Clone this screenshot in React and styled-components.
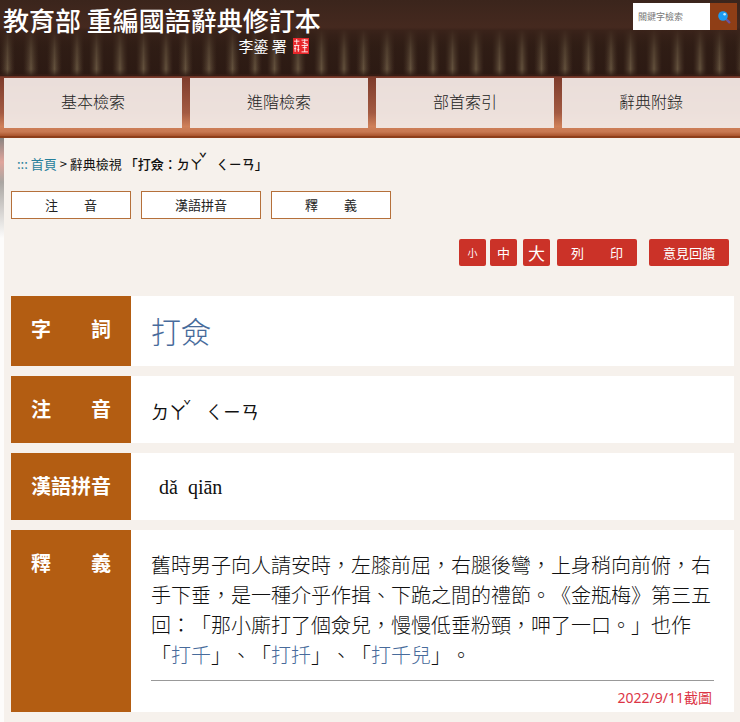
import React from "react";
import styled, { createGlobalStyle } from "styled-components";

const sans = '"Noto Sans CJK TC", sans-serif';

const GlobalStyle = createGlobalStyle`
  * { box-sizing: border-box; }
  body { margin: 0; background: #f6f1ec; font-family: ${sans}; color: #222; text-spacing-trim: space-all; }
  a { color: inherit; text-decoration: none; }
  h1, p, dl, dd, dt { margin: 0; }
  button, input { font-family: inherit; }
`;

const Header = styled.header`
  position: relative;
  isolation: isolate;
  height: 138px;
  border-bottom: 2px solid #8d3f1b;
  display: flex;
  flex-direction: column;
  justify-content: space-between;
  overflow: hidden;
`;

const Shelf = styled.svg`
  position: absolute;
  inset: 0;
  width: 100%;
  height: 100%;
  z-index: -1;
`;

const Masthead = styled.div`
  display: flex;
  justify-content: space-between;
  align-items: flex-start;
  padding: 3px 3px 0 3px;
`;

const Brand = styled.a`
  display: flex;
  flex-direction: column;
  color: #fff;
`;

const Title = styled.h1`
  font-size: 26px;
  line-height: 34px;
  font-weight: 500;
  white-space: pre;
`;

const Signature = styled.span`
  display: flex;
  justify-content: flex-end;
  align-items: center;
  gap: 6px;
  padding-right: 12px;
  font-size: 15px;
  line-height: 18px;
  white-space: pre;
`;

const Search = styled.form`
  display: flex;
  height: 27px;
`;

const SearchInput = styled.input`
  width: 77px;
  border: 0;
  border-radius: 0;
  padding: 0 5px;
  font-size: 9px;
  background: #fff;
  &::placeholder { color: #777; opacity: 1; }
`;

const SearchButton = styled.button`
  width: 27px;
  border: 0;
  padding: 0;
  display: grid;
  place-items: center;
  background: #8f3e16;
`;

const Nav = styled.nav`
  display: grid;
  grid-template-columns: repeat(4, 1fr);
  gap: 8px;
  padding: 0 0 8px 4px;
`;

const NavLink = styled.a`
  height: 50px;
  padding-bottom: 4px;
  display: grid;
  place-items: center;
  background: rgba(242, 235, 231, 0.93);
  color: #222;
  font-size: 16px;
  line-height: 24px;
  font-weight: 300;
`;

const Page = styled.main`
  padding: 14px 6px 10px 11px;
  background: linear-gradient(#8a8582, #e0a59c 24px, #aaa6a2 44px, #fdfcfb 100px, #fdfcfb) left top / 4px 100% no-repeat;
`;

const Crumbs = styled.nav`
  padding-left: 6px;
  font-size: 13px;
  line-height: 24px;
  color: #111;
  white-space: pre;
`;

const CrumbLink = styled.a`
  color: #26809b;
`;

const Entry = styled.span`
  font-weight: 500;
`;

const Syllable = styled.span`
  position: relative;
`;

const Tone = styled.span`
  position: absolute;
  right: -4px;
  bottom: 50%;
  font-size: 13px;
  line-height: 13px;
`;

const Tabs = styled.div`
  display: flex;
  gap: 10px;
  margin-top: 15px;
`;

const Tab = styled.a`
  width: 120px;
  height: 28px;
  display: grid;
  place-items: center;
  border: 1px solid #b5703a;
  background: #fff;
  font-size: 13px;
  line-height: 20px;
  white-space: pre;
`;

const Tools = styled.div`
  display: flex;
  justify-content: flex-end;
  margin: 20px 5px 30px 0;
`;

const Tool = styled.button`
  width: ${(p) => (p.$wide ? "80px" : "27px")};
  height: 27px;
  margin-left: ${(p) => p.$gap || 4}px;
  padding: 0;
  border: 0;
  border-radius: 2px;
  background: #cb3228;
  color: #fff;
  font-size: ${(p) => p.$size || 13}px;
  line-height: 24px;
  white-space: pre;
`;

const Rows = styled.dl`
  display: flex;
  flex-direction: column;
  gap: 10px;
`;

const Row = styled.div`
  display: grid;
  grid-template-columns: 120px 1fr;
  min-height: ${(p) => p.$height || 67}px;
  background: #fff;
`;

const Label = styled.dt`
  background: #b35d12;
  color: #fff;
  padding: 18px 0;
  text-align: center;
  font-size: 20px;
  line-height: 30px;
  font-weight: 700;
  white-space: pre;
`;

const Value = styled.dd`
  padding: ${(p) => p.$pad || "20px 20px 16px"};
  font-size: 20px;
  line-height: 30px;
  font-weight: 300;
  color: #111;
`;

const Word = styled.span`
  font-size: 30px;
  line-height: 36px;
  color: #486b9b;
`;

const Zhuyin = styled.span`
  font-size: 18px;
  font-weight: 400;
`;

const Pinyin = styled.span`
  padding-left: 8px;
  font-family: "Liberation Serif", serif;
  font-weight: 400;
  white-space: pre;
`;

const Definition = styled.p`
  padding-bottom: 10px;
  border-bottom: 1px solid #999;
  color: #111;
`;

const TermLink = styled.a`
  color: #486b9b;
`;

const Stamp = styled.p`
  padding: 5px 2px 2px 0;
  text-align: right;
  font-family: "Noto Sans", "Noto Sans CJK TC", sans-serif;
  font-size: 14px;
  line-height: 24px;
  font-weight: 400;
  color: #dc3545;
`;

function Bookshelf() {
  return (
    <Shelf aria-hidden="true">
      <defs>
        <linearGradient id="wall" x2="0" y2="1">
          <stop offset="0" stopColor="#3b251c" />
          <stop offset=".2" stopColor="#45291f" />
          <stop offset=".25" stopColor="#311e16" />
          <stop offset=".54" stopColor="#2c1a13" />
          <stop offset=".57" stopColor="#7e3c2c" />
          <stop offset=".83" stopColor="#a35a42" />
          <stop offset=".93" stopColor="#cf8059" />
          <stop offset=".97" stopColor="#c77851" />
          <stop offset="1" stopColor="#a9532b" />
        </linearGradient>
        <linearGradient id="spineGlow">
          <stop offset="0" stopColor="#4a3628" stopOpacity="0" />
          <stop offset=".5" stopColor="#66543f" stopOpacity=".95" />
          <stop offset="1" stopColor="#4a3628" stopOpacity="0" />
        </linearGradient>
        <linearGradient id="shelfShade" x2="0" y2="1">
          <stop offset="0" stopColor="#3a231a" stopOpacity=".95" />
          <stop offset=".4" stopColor="#2e1c14" stopOpacity=".35" />
          <stop offset=".85" stopColor="#2e1c14" stopOpacity="0" />
          <stop offset="1" stopColor="#2a1710" stopOpacity=".8" />
        </linearGradient>
        <pattern id="spines" width="89" height="138" patternUnits="userSpaceOnUse">
          <rect x="0" y="30" width="15" height="46" fill="url(#spineGlow)" />
          <rect x="23" y="30" width="16" height="46" fill="url(#spineGlow)" />
          <rect x="47" y="30" width="15" height="46" fill="url(#spineGlow)" />
          <rect x="70" y="30" width="14" height="46" fill="url(#spineGlow)" />
        </pattern>
      </defs>
      <rect width="100%" height="100%" fill="url(#wall)" />
      <rect width="100%" height="100%" fill="url(#spines)" />
      <rect y="30" width="100%" height="46" fill="url(#shelfShade)" />
    </Shelf>
  );
}

function Seal() {
  return (
    <svg width="16" height="16" viewBox="0 0 15 15" aria-hidden="true">
      <rect width="15" height="15" fill="#e8262a" />
      <path
        d="M1 3h5M3.500 1v5M1 7h5M2 7v6M5 7v6M1 10h2M4 11h2M8 2h6M11 1v5M9 4l5 2M8 7h6M9 9h4M11 7v6M8 13h6"
        stroke="#fff"
        strokeWidth=".8"
        fill="none"
      />
    </svg>
  );
}

function Magnifier() {
  return (
    <svg width="14" height="14" viewBox="0 0 14 14" aria-hidden="true">
      <path d="M8.500 8.500 12.300 12.300" stroke="#6a55a0" strokeWidth="2.400" strokeLinecap="round" />
      <circle cx="6" cy="6" r="4.800" fill="#1b9bf2" />
      <circle cx="7.600" cy="4.300" r="1.300" fill="#c4ebff" />
    </svg>
  );
}

const navItems = ["基本檢索", "進階檢索", "部首索引", "辭典附錄"];
const tabItems = ["注　　音", "漢語拼音", "釋　　義"];

export default function App() {
  return (
    <>
      <GlobalStyle />
      <Header>
        <Bookshelf />
        <Masthead>
          <Brand href="#">
            <Title>教育部 重編國語辭典修訂本</Title>
            <Signature>李鎏 署<Seal /></Signature>
          </Brand>
          <Search>
            <SearchInput aria-label="關鍵字檢索" placeholder="關鍵字檢索" />
            <SearchButton type="button" aria-label="搜尋"><Magnifier /></SearchButton>
          </Search>
        </Masthead>
        <Nav>
          {navItems.map((t) => <NavLink href="#" key={t}>{t}</NavLink>)}
        </Nav>
      </Header>
      <Page>
        <Crumbs>
          <CrumbLink href="#">:::</CrumbLink> <CrumbLink href="#">首頁</CrumbLink> &gt; 辭典檢視 <Entry>「打僉：<Syllable>ㄉㄚ<Tone>ˇ</Tone></Syllable>　ㄑㄧㄢ」</Entry>
        </Crumbs>
        <Tabs>
          {tabItems.map((t) => <Tab href="#" key={t}>{t}</Tab>)}
        </Tabs>
        <Tools>
          <Tool $size={10}>小</Tool>
          <Tool>中</Tool>
          <Tool $size={17} $gap={6}>大</Tool>
          <Tool $wide $gap={7}>列　　印</Tool>
          <Tool $wide $gap={12}>意見回饋</Tool>
        </Tools>
        <Rows>
          <Row $height={70}>
            <Label>字　　詞</Label>
            <Value $pad="16px 20px"><Word>打僉</Word></Value>
          </Row>
          <Row>
            <Label>注　　音</Label>
            <Value><Zhuyin><Syllable>ㄉㄚ<Tone>ˇ</Tone></Syllable>　ㄑㄧㄢ</Zhuyin></Value>
          </Row>
          <Row>
            <Label>漢語拼音</Label>
            <Value $pad="18px 20px"><Pinyin>dǎ  qiān</Pinyin></Value>
          </Row>
          <Row>
            <Label>釋　　義</Label>
            <Value $pad="20px 20px 0">
              <Definition>
                舊時男子向人請安時，左膝前屈，右腿後彎，上身稍向前俯，右手下垂，是一種介乎作揖、下跪之間的禮節。《金瓶梅》第三五回：「那小廝打了個僉兒，慢慢低垂粉頸，呷了一口。」也作「<TermLink href="#">打千</TermLink>」、「<TermLink href="#">打扦</TermLink>」、「<TermLink href="#">打千兒</TermLink>」。
              </Definition>
              <Stamp>2022/9/11截圖</Stamp>
            </Value>
          </Row>
        </Rows>
      </Page>
    </>
  );
}
